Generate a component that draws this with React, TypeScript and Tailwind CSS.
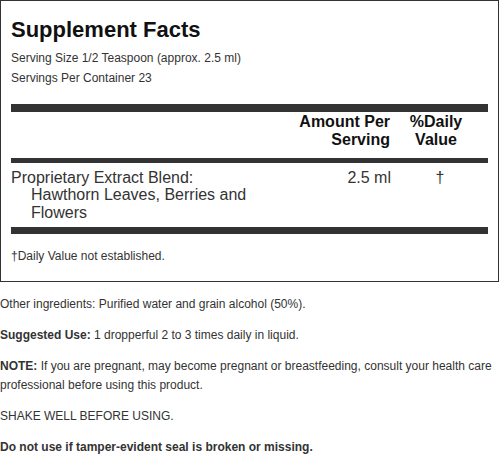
export default function App() {
  return (
    <div className="w-[499px] h-[457px] overflow-hidden bg-white text-[#333] font-['Liberation_Sans',Arial,sans-serif]">
      {/* Facts panel */}
      <div className="border border-[#333] px-[10px] pt-[16px] pb-[15px]">
        <h1 className="text-[22px] leading-[26px] font-bold text-[#111]">Supplement Facts</h1>
        <div className="mt-[5px] text-[12px] leading-[20px]">
          <p>Serving Size 1/2 Teaspoon (approx. 2.5 ml)</p>
          <p>Servings Per Container 23</p>
        </div>

        <div className="mt-[16px] h-[8px] bg-[#333]" />
        <div className="grid grid-cols-[280px_105px_80px_12px] pt-[1px] pb-[9px] text-[16px] leading-[18px] font-bold text-[#111]">
          <div />
          <div className="text-right pr-[6px] whitespace-nowrap">Amount Per<br />Serving</div>
          <div className="text-center whitespace-nowrap">%Daily<br />Value</div>
          <div />
        </div>

        <div className="h-[5px] bg-[#333]" />
        <div className="grid grid-cols-[280px_105px_80px_12px] pt-[5.5px] pb-[6px] text-[16px] leading-[17.5px]">
          <div className="w-[260px]">
            <p>Proprietary Extract Blend:</p>
            <p className="pl-[20px]">Hawthorn Leaves, Berries and Flowers</p>
          </div>
          <div className="text-right pr-[5px] whitespace-nowrap">2.5 ml</div>
          <div className="text-center pl-[8px]">†</div>
          <div />
        </div>

        <div className="h-[7px] bg-[#333]" />
        <p className="pt-[12px] text-[12px] leading-[20px]">†Daily Value not established.</p>
      </div>

      {/* Notes below */}
      <div className="mt-[13px] space-y-[12px] text-[12px] leading-[19px]">
        <p>Other ingredients: Purified water and grain alcohol (50%).</p>
        <p><span className="font-bold">Suggested Use:</span> 1 dropperful 2 to 3 times daily in liquid.</p>
        <p>
          <span className="font-bold">NOTE:</span> If you are pregnant, may become pregnant or breastfeeding, consult your health care professional before using this product.
        </p>
        <p>SHAKE WELL BEFORE USING.</p>
        <p className="font-bold">Do not use if tamper-evident seal is broken or missing.</p>
      </div>
    </div>
  );
}
